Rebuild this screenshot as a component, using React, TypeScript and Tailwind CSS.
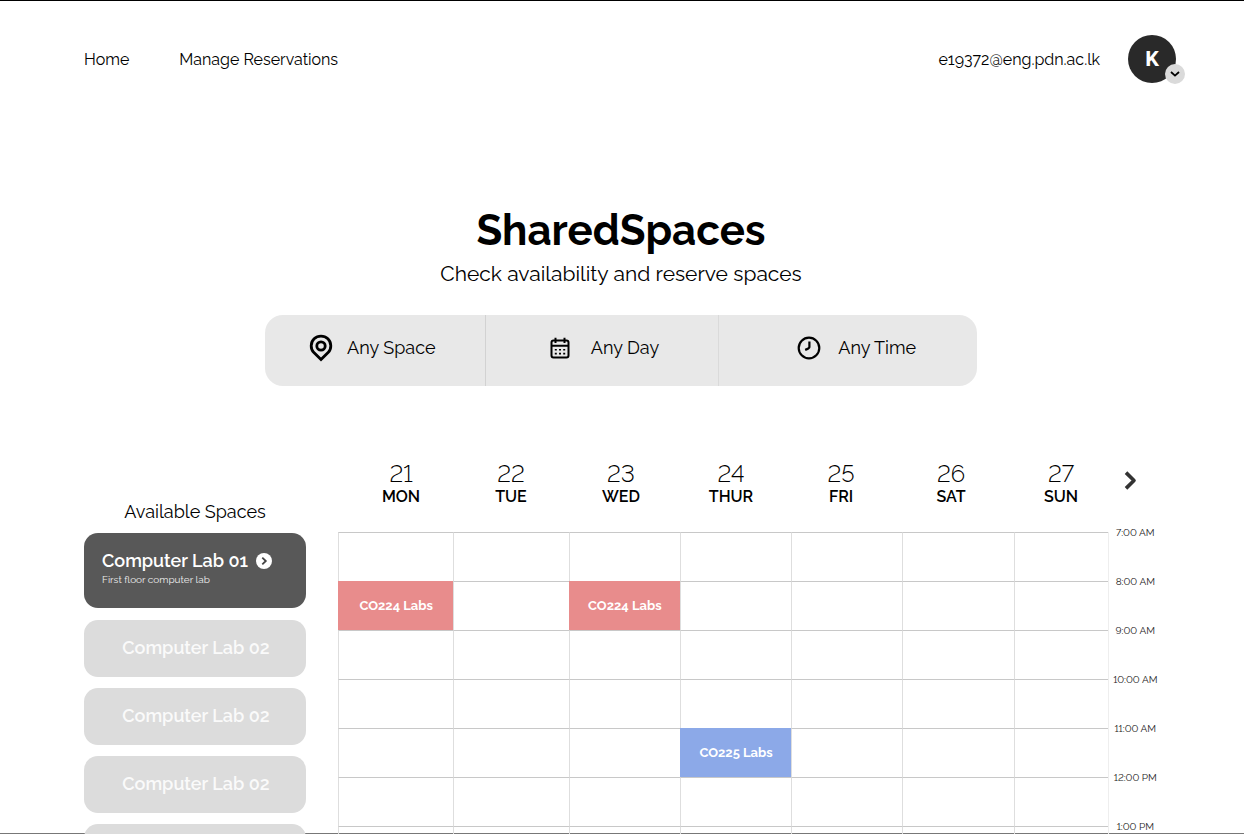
import React from "react";

type Booking = { label: string; tone: string };

const days = [
  { date: 21, name: "MON" },
  { date: 22, name: "TUE" },
  { date: 23, name: "WED" },
  { date: 24, name: "THUR" },
  { date: 25, name: "FRI" },
  { date: 26, name: "SAT" },
  { date: 27, name: "SUN" },
];

const hours = ["7:00 AM", "8:00 AM", "9:00 AM", "10:00 AM", "11:00 AM", "12:00 PM", "1:00 PM"];

const red = "bg-[#e88c8c] border-[#e88c8c]";
const blue = "bg-[#8ca9e8] border-[#8ca9e8]";

const bookings: Record<string, Booking> = {
  "8:00 AM-21": { label: "CO224 Labs", tone: red },
  "8:00 AM-23": { label: "CO224 Labs", tone: red },
  "11:00 AM-24": { label: "CO225 Labs", tone: blue },
};

const otherSpaces = ["Computer Lab 02", "Computer Lab 02", "Computer Lab 02", "Computer Lab 02"];

function PinIcon() {
  return (
    <svg width="24" height="28" viewBox="0 0 24 28" fill="none" stroke="black" strokeWidth="2.8" aria-hidden="true">
      <path d="M12 25.6 L4.9 18.6 A9.8 9.8 0 1 1 19.1 18.6 Z" strokeLinejoin="miter" />
      <circle cx="12" cy="12" r="4.2" />
    </svg>
  );
}

function CalendarIcon() {
  return (
    <svg width="20" height="22" viewBox="0 0 20 22" fill="none" stroke="black" strokeWidth="2" aria-hidden="true">
      <rect x="1.5" y="3.5" width="17" height="17" rx="2" />
      <path d="M1.5 8.8H18.5M5.5 0.8V6M14.5 0.8V6" />
      <path d="M4.8 12.8h2M9 12.8h2M13.2 12.8h2M4.8 16.6h2M9 16.6h2M13.2 16.6h2" strokeWidth="1.6" />
    </svg>
  );
}

function ClockIcon() {
  return (
    <svg width="24" height="24" viewBox="0 0 24 24" fill="none" stroke="black" strokeWidth="2.2" aria-hidden="true">
      <circle cx="12" cy="12" r="10.3" />
      <path d="M12.4 5.6V11C12.4 12.4 11.6 12.5 8.2 13.9" strokeWidth="2.2" />
    </svg>
  );
}

function Header() {
  return (
    <header className="flex items-center justify-between pt-[34px] pr-[68px] pl-[84px]">
      <nav className="flex gap-[50px] pt-0.5 leading-6">
        <a href="#home">Home</a>
        <a href="#reservations">Manage Reservations</a>
      </nav>
      <div className="flex items-center gap-7">
        <span className="pt-0.5 leading-6 oldstyle-nums">e19372@eng.pdn.ac.lk</span>
        <button type="button" aria-label="Account menu" className="relative size-12 rounded-full bg-[#292929] text-xl font-extrabold text-white">
          K
          <span className="absolute -right-[9px] -bottom-px flex size-5 items-center justify-center rounded-full bg-[#dadada]">
            <svg width="10" height="6" viewBox="0 0 10 6" fill="none" stroke="black" strokeWidth="1.8" aria-hidden="true">
              <path d="M1 1L5 4.6L9 1" />
            </svg>
          </span>
        </button>
      </div>
    </header>
  );
}

function SearchBar() {
  const item = "flex items-center pb-[5px] text-lg";
  return (
    <div className="mx-auto mt-[27px] flex h-[71px] w-[712px] max-w-full rounded-[18px] bg-[#e8e8e8]">
      <button type="button" className={item + " w-[31%] gap-[14px] border-r border-[#d2d2d2] pl-11"}>
        <PinIcon />
        Any Space
      </button>
      <button type="button" className={item + " w-[32.8%] gap-[21px] border-r border-[#dadada] pl-16"}>
        <CalendarIcon />
        Any Day
      </button>
      <button type="button" className={item + " flex-1 gap-[17px] pl-[78px]"}>
        <ClockIcon />
        Any Time
      </button>
    </div>
  );
}

function Spaces() {
  return (
    <aside className="w-[222px] shrink-0 pt-[39px]">
      <h2 className="text-center text-lg leading-6">Available Spaces</h2>
      <div className="mt-[9px] flex flex-col">
        <button type="button" className="mb-3 h-[75px] rounded-[14px] bg-[#585858] px-[18px] pb-1 text-left text-white">
          <span className="flex items-center gap-2 text-lg leading-[22px] font-semibold oldstyle-nums">
            Computer Lab 01
            <svg width="16" height="16" viewBox="0 0 16 16" aria-hidden="true">
              <circle cx="8" cy="8" r="8" fill="white" />
              <path d="M6.3 4.6L9.8 8L6.3 11.4" fill="none" stroke="#444444" strokeWidth="1.8" />
            </svg>
          </span>
          <span className="block text-[10px] leading-[15px] text-[#ececec]">First floor computer lab</span>
        </button>
        <div className="flex flex-col gap-[11px]">
          {otherSpaces.map((name, i) => (
            <button key={i} type="button" className="h-[57px] rounded-[14px] bg-[#dcdcdc] pb-0.5 pl-0.5 text-lg font-semibold text-[#fafafa] oldstyle-nums">
              {name}
            </button>
          ))}
        </div>
      </div>
    </aside>
  );
}

function Schedule() {
  return (
    <section className="min-w-0 flex-1 lining-nums">
      <div className="flex items-start pl-2">
        <ol className="grid flex-1 grid-cols-7 text-center">
          {days.map((day) => (
            <li key={day.date}>
              <div className="text-2xl leading-[26px] font-light">{day.date}</div>
              <div className="text-base leading-5 font-semibold">{day.name}</div>
            </li>
          ))}
        </ol>
        <button type="button" aria-label="Next week" className="flex w-[46px] pt-[10px] pl-2">
          <svg width="13" height="19" viewBox="0 0 13 19" fill="none" stroke="#333333" strokeWidth="3.6" strokeLinejoin="round" aria-hidden="true">
            <path d="M2 1.6L10 9.5L2 17.4" />
          </svg>
        </button>
      </div>
      <table className="mt-[25px] w-full table-fixed border-separate border-spacing-0">
        <colgroup>
          <col className="w-[14%]" />
          <col className="w-[14%]" />
          <col className="w-[13.5%]" />
          <col className="w-[13.5%]" />
          <col className="w-[13.5%]" />
          <col className="w-[13.5%]" />
          <col className="w-[11.4%]" />
          <col />
        </colgroup>
        <tbody>
          {hours.map((hour) => (
            <tr key={hour} className="h-[49px]">
              {days.map((day) => {
                const booking = bookings[`${hour}-${day.date}`];
                return booking ? (
                  <td key={day.date} className={"border-t border-l p-0 text-center text-[13px] font-bold text-white oldstyle-nums " + booking.tone}>
                    {booking.label}
                  </td>
                ) : (
                  <td key={day.date} className="border-t border-l border-t-[#c8c8c8] border-l-[#dedede] p-0" />
                );
              })}
              <th scope="row" className="border-l border-[#eeeeee] p-0 align-top text-[10px] font-normal whitespace-nowrap text-[#222222]">
                <span className="-mt-[7px] block leading-4">{hour}</span>
              </th>
            </tr>
          ))}
        </tbody>
      </table>
    </section>
  );
}

export default function App() {
  return (
    <div className="relative h-screen overflow-hidden border-t border-black bg-white font-['Raleway','Lato',sans-serif] text-black">
      <div className="absolute inset-x-0 bottom-0 border-b border-[#777777]" />
      <div className="relative">
        <Header />
        <section className="mt-[118px] pr-[26px] pl-6 text-center">
          <h1 className="text-[42px] leading-[60px] font-bold">SharedSpaces</h1>
          <p className="-mt-px text-[21px] leading-7">Check availability and reserve spaces</p>
          <SearchBar />
        </section>
        <main className="mt-[75px] flex gap-8 pr-[82px] pl-[84px]">
          <Spaces />
          <Schedule />
        </main>
      </div>
    </div>
  );
}
